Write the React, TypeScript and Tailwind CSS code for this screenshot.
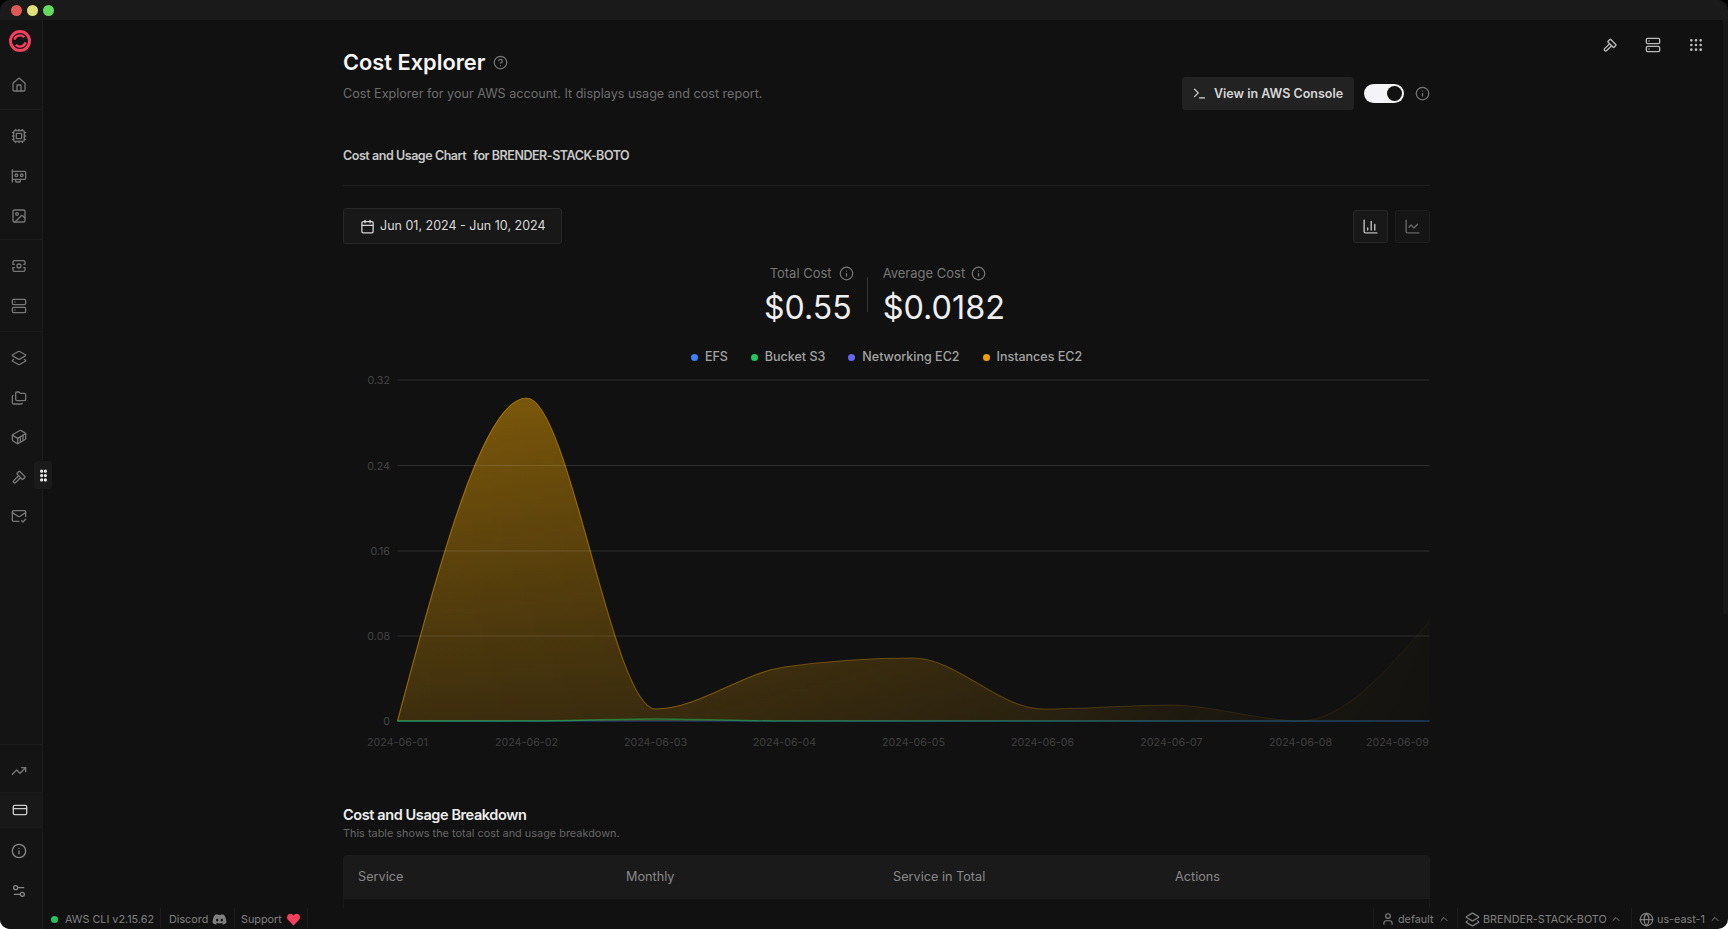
import { Calendar, ChartColumn, ChartLine, ChevronUp, CircleHelp, Container, Cpu, CreditCard, Folders, Globe, Gpu, Grip, GripVertical, House, Image, Info, Layers2, MailCheck, Server, Settings2, Terminal, TrendingUp, User } from 'lucide-react';
import { FaDiscord, FaHeart } from 'react-icons/fa';
import { TbHammer } from 'react-icons/tb';

const X0 = 397.5;
const STEP = 129;
const dates = ['2024-06-01', '2024-06-02', '2024-06-03', '2024-06-04', '2024-06-05', '2024-06-06', '2024-06-07', '2024-06-08', '2024-06-09'];

// same interpolation as a monotone-x chart line
function linePath(ys: number[]) {
  const xs = ys.map((_, i) => X0 + i * STEP);
  const sign = (v: number) => (v < 0 ? -1 : 1);
  const t: number[] = [];
  for (let i = 1; i < ys.length - 1; i++) {
    const s0 = (ys[i] - ys[i - 1]) / STEP;
    const s1 = (ys[i + 1] - ys[i]) / STEP;
    const p = (s0 + s1) / 2;
    t[i] = (sign(s0) + sign(s1)) * Math.min(Math.abs(s0), Math.abs(s1), 0.5 * Math.abs(p)) || 0;
  }
  t[0] = ((3 * (ys[1] - ys[0])) / STEP - t[1]) / 2;
  const n = ys.length - 1;
  t[n] = ((3 * (ys[n] - ys[n - 1])) / STEP - t[n - 1]) / 2;
  const dx = STEP / 3;
  let d = `M${xs[0]},${ys[0]}`;
  for (let i = 0; i < n; i++) {
    d += ` C${xs[i] + dx},${ys[i] + dx * t[i]} ${xs[i + 1] - dx},${ys[i + 1] - dx * t[i + 1]} ${xs[i + 1]},${ys[i + 1]}`;
  }
  return d;
}

const instances = [343, 20, 331, 289, 280, 331, 327, 343, 243];
const bucket = [343, 343, 341, 343, 343, 343, 343, 343, 343];
const flat = [343, 343, 343, 343, 343, 343, 343, 343, 343];

function CostChart() {
  const grid = [
    { label: '0.32', y: 2 },
    { label: '0.24', y: 87.5 },
    { label: '0.16', y: 173 },
    { label: '0.08', y: 258 },
    { label: '0', y: 343 },
  ];
  const area = `${linePath(instances)} L${X0 + 8 * STEP},343 L${X0},343 Z`;
  return (
    <svg width="1087" height="382" viewBox="343 -8 1087 382" className="block">
      <defs>
        <linearGradient id="fillY" x1="0" y1="0" x2="0" y2="1">
          <stop offset="0%" stopColor="#eda303" stopOpacity="0.5" />
          <stop offset="100%" stopColor="#eda303" stopOpacity="0.2" />
        </linearGradient>
        <linearGradient id="fadeX" gradientUnits="userSpaceOnUse" x1="397" y1="0" x2="1430" y2="0">
          <stop offset="0%" stopColor="#fff" stopOpacity="1" />
          <stop offset="25%" stopColor="#fff" stopOpacity="0.9" />
          <stop offset="60%" stopColor="#fff" stopOpacity="0.6" />
          <stop offset="80%" stopColor="#fff" stopOpacity="0.25" />
          <stop offset="100%" stopColor="#fff" stopOpacity="0.07" />
        </linearGradient>
        <mask id="fade" maskUnits="userSpaceOnUse" x="343" y="-8" width="1087" height="382">
          <rect x="343" y="-8" width="1087" height="382" fill="url(#fadeX)" />
        </mask>
      </defs>
      <path d={linePath(flat)} fill="none" stroke="#3b82f6" strokeWidth="1.4" strokeOpacity="0.35" />
      <g mask="url(#fade)">
        <path d={area} fill="url(#fillY)" />
        <path d={linePath(instances)} fill="none" stroke="#eda303" strokeOpacity="0.5" strokeWidth="1.2" />
        <path d={linePath(bucket)} fill="none" stroke="#22c55e" strokeOpacity="0.6" strokeWidth="1.4" />
      </g>
      {grid.map((g) => (
        <g key={g.label}>
          <line x1={X0} x2="1429.5" y1={g.y} y2={g.y} stroke="#fff" strokeOpacity={g.label === '0' ? 0 : 0.12} strokeWidth="1" />
          <text x="390" y={g.y + 4} textAnchor="end" fontSize="10.7" fill="#444">
            {g.label}
          </text>
        </g>
      ))}
      <g fontSize="10.7" fill="#3f3f3f">
        {dates.map((d, i) => (
          <text key={d} x={i === 8 ? 1429 : X0 + i * STEP} y="367.5" textAnchor={i === 8 ? 'end' : 'middle'}>
            {d}
          </text>
        ))}
      </g>
    </svg>
  );
}

function Logo() {
  return (
    <svg width="22" height="22" viewBox="0 0 22 22" fill="none" stroke="#f43f5e">
      <circle cx="11" cy="11" r="9.5" strokeWidth="3" />
      <path d="M5.4 9.6a5.8 5.8 0 0 1 9.8-2.4" strokeWidth="2.4" />
      <path d="M16.6 12.4a5.8 5.8 0 0 1-9.8 2.4" strokeWidth="2.4" />
    </svg>
  );
}

function ScanBox() {
  return (
    <svg width="16" height="16" viewBox="0 0 24 24" fill="none" stroke="currentColor" strokeWidth="2" strokeLinecap="round" strokeLinejoin="round">
      <path d="M3 9.5V6a2 2 0 0 1 2-2h14a2 2 0 0 1 2 2v3.5h-2" />
      <path d="M3 9.5h2" />
      <path d="M3 14.5V18a2 2 0 0 0 2 2h14a2 2 0 0 0 2-2v-3.5h-2" />
      <path d="M3 14.5h2" />
      <circle cx="12" cy="12" r="3" />
    </svg>
  );
}

function NavGroup({ children, className }: { children: React.ReactNode; className: string }) {
  return <div className={`flex flex-col items-center pr-[5px] text-[#777] ${className}`}>{children}</div>;
}

function Sidebar() {
  return (
    <aside className="relative flex w-[43px] shrink-0 flex-col border-r border-[#1b1b1b] bg-[#141414]">
      <div className="flex h-[90px] flex-col items-center border-b border-[#1b1b1b] pr-[3px] pt-[10px]">
        <Logo />
        <House size={16} className="ml-[-2px] mt-[25px] text-[#777]" />
      </div>
      <NavGroup className="h-[130px] gap-[24px] border-b border-[#1b1b1b] pt-[18px]">
        <Cpu size={16} />
        <Gpu size={16} />
        <Image size={16} />
      </NavGroup>
      <NavGroup className="h-[92px] gap-[24px] border-b border-[#1b1b1b] pt-[18px]">
        <ScanBox />
        <Server size={16} />
      </NavGroup>
      <NavGroup className="flex-1 gap-[23.5px] pt-[18px]">
        <Layers2 size={16} />
        <Folders size={16} />
        <Container size={16} />
        <TbHammer size={16} />
        <MailCheck size={16} />
      </NavGroup>
      <div className="flex h-[48px] flex-col items-center border-t border-[#1b1b1b] pr-[5px] pt-[18px] text-[#777]">
        <TrendingUp size={16} />
      </div>
      <div className="flex h-[36px] items-center justify-center border-y border-[#1b1b1b] bg-[#181818] pr-[2px] text-[#ccc]">
        <CreditCard size={16} />
      </div>
      <div className="flex h-[101px] flex-col items-center gap-[24px] pr-[5px] pt-[15px] text-[#888]">
        <Info size={16} />
        <Settings2 size={16} />
      </div>
      <div className="absolute left-[34px] top-[441px] z-10 flex h-[28px] w-[18px] items-center justify-center rounded bg-[#1a1a1a] text-white">
        <GripVertical size={15} strokeWidth={3} />
      </div>
    </aside>
  );
}

function StatusItem({ children, className = '' }: { children: React.ReactNode; className?: string }) {
  return <div className={`flex h-full items-center border-[#1c1c1c] ${className}`}>{children}</div>;
}

function StatusBar() {
  return (
    <footer className="flex h-[21px] shrink-0 items-center justify-between text-[10.8px] leading-[21px] text-[#808080]">
      <div className="flex h-full items-center">
        <StatusItem className="w-[118px] gap-[7px] border-r pl-[8px] pt-[1px]">
          <span className="h-[7px] w-[7px] rounded-full bg-[#22c55e]" />
          AWS CLI v2.15.62
        </StatusItem>
        <StatusItem className="w-[74px] gap-[4px] border-r pl-[8px] pt-[1px]">
          Discord <FaDiscord size={15} />
        </StatusItem>
        <StatusItem className="w-[73px] gap-[5px] border-r pl-[6px] pt-[1px]">
          Support <FaHeart size={13} className="text-[#f43f5e]" />
        </StatusItem>
      </div>
      <div className="flex h-full items-center">
        <StatusItem className="w-[84px] gap-[3px] border-l pl-[7px] pt-[1px]">
          <User size={14} /> default <ChevronUp size={12} className="ml-[1px]" />
        </StatusItem>
        <StatusItem className="w-[174px] gap-[3px] border-l pl-[7px] pt-[1px]">
          <Layers2 size={15} /> BRENDER-STACK-BOTO <ChevronUp size={12} />
        </StatusItem>
        <StatusItem className="w-[97px] gap-[3px] border-l pl-[7px] pt-[1px]">
          <Globe size={15} /> us-east-1 <ChevronUp size={12} className="ml-[1px]" />
        </StatusItem>
      </div>
    </footer>
  );
}

export default function App() {
  const legend = [
    { name: 'EFS', color: 'bg-[#3b82f6]' },
    { name: 'Bucket S3', color: 'bg-[#22c55e]' },
    { name: 'Networking EC2', color: 'bg-[#6366f1]' },
    { name: 'Instances EC2', color: 'bg-[#f59e0b]' },
  ];
  return (
    <div className="h-[929px] w-[1728px] overflow-hidden bg-[linear-gradient(#000_50%,#fff_50%)] font-['Inter',sans-serif]">
      <div className="relative flex h-full flex-col overflow-hidden rounded-[10px] bg-[#111111]">
        <header className="flex h-[20px] shrink-0 items-center gap-[5px] bg-[#1a1a1a] pl-[11px]">
          <span className="h-[11px] w-[11px] rounded-full bg-[#e05a55]" />
          <span className="h-[11px] w-[11px] rounded-full bg-[#dfe07a]" />
          <span className="h-[11px] w-[11px] rounded-full bg-[#67d860]" />
        </header>
        <div className="flex min-h-0 flex-1">
          <Sidebar />
          <div className="flex min-w-0 flex-1 flex-col">
            <main className="relative min-h-0 flex-1 overflow-hidden pl-[300px] pr-[298px] pt-[28px]">
              <div className="absolute right-[24px] top-[17px] flex items-center gap-[27px] text-[#bbb]">
                <TbHammer size={16} />
                <Server size={16} />
                <Grip size={16} />
              </div>
              <div className="flex items-start justify-between">
                <div>
                  <div className="flex items-center gap-[8px]">
                    <h1 className="text-[21.8px] font-semibold leading-[28px] text-[#f5f5f5]">Cost Explorer</h1>
                    <CircleHelp size={15} className="text-[#777]" />
                  </div>
                  <p className="mt-[8px] text-[12.6px] leading-[20px] text-[#6e6e6e]">
                    Cost Explorer for your AWS account. It displays usage and cost report.
                  </p>
                </div>
                <div className="mt-[29px] flex items-center">
                  <button className="flex h-[33px] w-[172px] items-center gap-[7px] rounded-[3px] bg-[#222222] pl-[10px] text-[12.5px] font-semibold text-[#d6d6d6]">
                    <Terminal size={15} />
                    <span className="pt-[1px]">View in AWS Console</span>
                  </button>
                  <div className="ml-[10px] flex h-[19px] w-[40px] items-center justify-end rounded-full bg-[#f4f4f6] pr-[2px]">
                    <span className="h-[15px] w-[15px] rounded-full bg-[#111]" />
                  </div>
                  <Info size={15} className="ml-[11px] text-[#777]" />
                </div>
              </div>
              <h2 className="mt-[36px] h-[40px] border-b border-[#1c1c1c] text-[12.5px] font-semibold leading-[20px] tracking-[-0.45px] text-[#c8c8c8]">
                Cost and Usage Chart<span className="ml-[7px]">for BRENDER-STACK-BOTO</span>
              </h2>
              <div className="mt-[22px] flex items-center justify-between">
                <button className="flex h-[36px] w-[219px] items-center gap-[5px] rounded-[3px] border border-[#272727] bg-[#181818] pl-[16px] text-[12.5px] text-[#d8d8d8]">
                  <Calendar size={15} />
                  <span className="pt-[1px]">Jun 01, 2024 - Jun 10, 2024</span>
                </button>
                <div className="flex gap-[7px]">
                  <span className="flex h-[33px] w-[35px] items-center justify-center rounded-[3px] border border-[#272727] bg-[#181818] text-[#bbb]">
                    <ChartColumn size={17} />
                  </span>
                  <span className="flex h-[33px] w-[35px] items-center justify-center rounded-[3px] border border-[#1e1e1e] bg-[#151515] text-[#666]">
                    <ChartLine size={17} />
                  </span>
                </div>
              </div>
              <div className="mt-[19px] flex justify-center pr-[4px]">
                <div className="flex flex-col items-end pr-[15px]">
                  <div className="mr-[-2px] flex items-center gap-[7px] text-[13px] leading-[20px] text-[#777]">
                    Total Cost <Info size={15} />
                  </div>
                  <div className="mt-[5px] text-[32px] leading-[40px] text-[#eeeeee]">$0.55</div>
                </div>
                <div className="mt-[14px] h-[35px] w-px bg-[#333]" />
                <div className="flex flex-col items-start pl-[15px]">
                  <div className="flex items-center gap-[6px] text-[13px] leading-[20px] text-[#777]">
                    Average Cost <Info size={15} />
                  </div>
                  <div className="mt-[5px] text-[32.4px] leading-[40px] text-[#eeeeee]">$0.0182</div>
                </div>
              </div>
              <div className="mt-[19px] flex h-[20px] items-center justify-center gap-[23px] text-[12.5px] font-medium text-[#a3a3a3]">
                {legend.map((l) => (
                  <div key={l.name} className="flex items-center gap-[7px]">
                    <span className={`h-[7px] w-[7px] rounded-full ${l.color}`} />
                    {l.name}
                  </div>
                ))}
              </div>
              <div className="mt-[3px]">
                <CostChart />
              </div>
              <h3 className="mt-[53px] text-[14.5px] font-semibold leading-[20px] tracking-[-0.4px] text-[#eeeeee]">
                Cost and Usage Breakdown
              </h3>
              <p className="text-[10.9px] leading-[16px] text-[#666]">This table shows the total cost and usage breakdown.</p>
              <div className="mt-[14px] flex h-[44px] items-center rounded-t-[4px] border-b border-[#1c1c1c] bg-[#1a1a1a] pl-[15px] text-[12.7px] text-[#888]">
                <span className="w-[268px]">Service</span>
                <span className="w-[267px]">Monthly</span>
                <span className="w-[282px]">Service in Total</span>
                <span>Actions</span>
              </div>
              <div className="h-[12px] border-x border-[#191919]" />
              <div className="absolute right-0 top-0 h-[594px] w-[5px] rounded-b-[2px] bg-[#181818]" />
            </main>
            <StatusBar />
          </div>
        </div>
      </div>
    </div>
  );
}
